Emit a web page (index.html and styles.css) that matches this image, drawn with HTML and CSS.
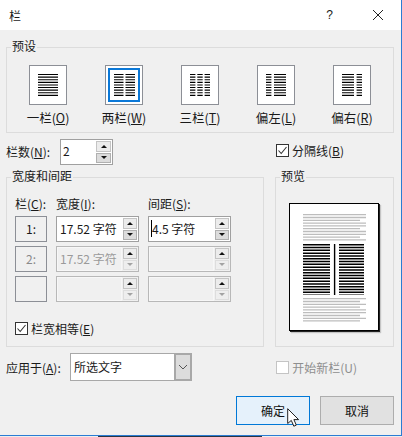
FILE: index.html
```html
<!DOCTYPE html>
<html lang="zh">
<head>
<meta charset="utf-8">
<title>栏</title>
<link rel="stylesheet" href="styles.css">
</head>
<body>
<div class="dialog">
  <header class="titlebar">
    <span class="title">栏</span>
    <span class="help">?</span>
    <svg class="close" width="12" height="12" viewBox="0 0 12 12"><path d="M1 1 L11 11 M11 1 L1 11" stroke="#222" stroke-width="1" fill="none"/></svg>
  </header>
  <main class="body">
    <section class="group presets">
      <span class="legend">预设</span>
      <div class="preset-row">
        <div class="preset">
          <div class="tile"><svg width="20" height="22" viewBox="0 0 20 22"><path class="ln" stroke-width="20" d="M10 0V22"/></svg></div>
          <span class="plabel">一栏(<u>O</u>)</span>
        </div>
        <div class="preset">
          <div class="tile selected"><svg width="21" height="22" viewBox="0 0 21 22"><path class="ln" stroke-width="9.5" d="M4.75 0V22"/><path class="ln" stroke-width="9.5" d="M16.25 0V22"/></svg></div>
          <span class="plabel">两栏(<u>W</u>)</span>
        </div>
        <div class="preset">
          <div class="tile"><svg width="20" height="22" viewBox="0 0 20 22"><path class="ln" stroke-width="5.4" d="M2.7 0V22"/><path class="ln" stroke-width="5.4" d="M10 0V22"/><path class="ln" stroke-width="5.4" d="M17.3 0V22"/></svg></div>
          <span class="plabel">三栏(<u>T</u>)</span>
        </div>
        <div class="preset">
          <div class="tile"><svg width="20" height="22" viewBox="0 0 20 22"><path class="ln" stroke-width="5.4" d="M2.7 0V22"/><path class="ln" stroke-width="12" d="M14 0V22"/></svg></div>
          <span class="plabel">偏左(<u>L</u>)</span>
        </div>
        <div class="preset">
          <div class="tile"><svg width="20" height="22" viewBox="0 0 20 22"><path class="ln" stroke-width="12" d="M6 0V22"/><path class="ln" stroke-width="5.4" d="M17.3 0V22"/></svg></div>
          <span class="plabel">偏右(<u>R</u>)</span>
        </div>
      </div>
    </section>

    <div class="count-row">
      <div class="count-left">
        <span class="count-label">栏数(<u>N</u>):</span>
        <div class="spin count-spin">
          <span class="value count-value">2</span>
          <div class="arrows big"><span class="arrow top"><i class="up"></i></span><span class="arrow bottom"><i class="down"></i></span></div>
        </div>
      </div>
      <label class="check">
        <span class="box"><svg width="13" height="13" viewBox="0 0 13 13"><path d="M2.5 6.5 L5.2 9.5 L10.5 3" stroke="#333" stroke-width="1.1" fill="none"/></svg></span>
        <span>分隔线(<u>B</u>)</span>
      </label>
    </div>

    <div class="middle">
      <section class="group width-group">
        <span class="legend">宽度和间距</span>
        <div class="grid">
          <span class="hd">栏(<u>C</u>):</span>
          <span class="hd">宽度(<u>I</u>):</span>
          <span class="hd">间距(<u>S</u>):</span>

          <div class="num">1:</div>
          <div class="spin wide"><span class="value">17.52 字符</span><div class="arrows"><span class="arrow top"><i class="up"></i></span><span class="arrow bottom"><i class="down"></i></span></div></div>
          <div class="spin wide"><span class="value gap-value"><b class="caret"></b>4.5 字符</span><div class="arrows"><span class="arrow top"><i class="up"></i></span><span class="arrow bottom"><i class="down"></i></span></div></div>

          <div class="num muted">2:</div>
          <div class="spin wide off"><span class="value">17.52 字符</span><div class="arrows"><span class="arrow top"><i class="up"></i></span><span class="arrow faint"><i class="down dim"></i></span></div></div>
          <div class="spin wide off"><span class="value"></span><div class="arrows"><span class="arrow top"><i class="up"></i></span><span class="arrow faint"><i class="down dim"></i></span></div></div>

          <div class="num"></div>
          <div class="spin wide off"><span class="value"></span><div class="arrows"><span class="arrow top"><i class="up"></i></span><span class="arrow faint"><i class="down dim"></i></span></div></div>
          <div class="spin wide off"><span class="value"></span><div class="arrows"><span class="arrow top"><i class="up"></i></span><span class="arrow faint"><i class="down dim"></i></span></div></div>
        </div>
        <label class="check equal">
          <span class="box"><svg width="13" height="13" viewBox="0 0 13 13"><path d="M2.5 6.5 L5.2 9.5 L10.5 3" stroke="#333" stroke-width="1.1" fill="none"/></svg></span>
          <span>栏宽相等(<u>E</u>)</span>
        </label>
      </section>

      <section class="group preview">
        <span class="legend">预览</span>
        <div class="page">
          <svg class="sample" width="63" height="108" viewBox="0 0 63 108">
            <path class="grey" d="M0 .7H63M0 3.5H63M0 6.3H57M0 9.1H63M0 11.9H63M0 14.7H57M0 17.5H63M0 20.3H63M0 23.1H57M0 25.9H63"/>
            <path class="black" stroke-width="27" d="M13.5 30V81"/>
            <path class="black" stroke-width="25" d="M48.5 30V81"/>
            <path class="divider" d="M31.6 30V81"/>
            <path class="grey" d="M0 84.7H63M0 87.5H57M0 90.3H63M0 93.1H57M0 95.9H63M0 98.7H63M0 101.5H57M0 104.3H63M0 106.9H57"/>
          </svg>
        </div>
      </section>
    </div>

    <div class="apply-row">
      <div class="apply-left">
        <span class="apply-label">应用于(<u>A</u>):</span>
        <div class="select">
          <span class="select-value">所选文字</span>
          <span class="select-btn"><svg width="10" height="6" viewBox="0 0 10 6"><path d="M1 1 L5 5 L9 1" stroke="#555" stroke-width="1" fill="none"/></svg></span>
        </div>
      </div>
      <label class="check disabled">
        <span class="box"></span>
        <span>开始新栏(U)</span>
      </label>
    </div>

    <div class="actions">
      <button class="btn primary">确定</button>
      <button class="btn">取消</button>
      <svg class="cursor" width="13" height="20" viewBox="0 0 13 20"><path d="M.7 .7 V15.5 L4.3 12.4 L6.8 18.2 L9.3 17.1 L6.9 11.6 H11.6 Z" fill="#fff" stroke="#222" stroke-width="1"/></svg>
    </div>
  </main>
</div>
</body>
</html>
```

FILE: styles.css
```css
* { box-sizing: border-box; }
html, body { margin: 0; padding: 0; }
body {
  width: 402px;
  height: 437px;
  overflow: hidden;
  background: linear-gradient(to right, #eeeeee 98px, #2a3440 98px, #2a3440 262px, #eeeeee 262px);
  font-family: "Noto Sans CJK SC", "Liberation Sans", sans-serif;
  font-size: 12px;
  color: #1a1a1a;
}
u { text-underline-offset: 1px; }
.dialog {
  width: 402px;
  height: 436px;
  background: #f0f0f0;
  border-right: 1px solid #2b7cd3;
  border-bottom: 1px solid #2b7cd3;
  display: flex;
  flex-direction: column;
}
.titlebar {
  height: 30px;
  background: #fff;
  display: flex;
  align-items: center;
  padding: 0 17px 0 9px;
  flex: none;
}
.title { font-size: 12px; flex: 1; }
.help { font-family: "Liberation Sans", sans-serif; font-size: 12px; margin-right: 39px; }
.body { padding: 17px 7px 0 6px; flex: 1; display: flex; flex-direction: column; position: relative; }
.group { border: 1px solid #dcdcdc; position: relative; }
.legend {
  position: absolute;
  left: 4px;
  top: -10px;
  background: #f0f0f0;
  padding: 0 1px;
  line-height: 16px;
  font-size: 12px;
}
.presets { height: 86px; }
.preset-row { display: flex; padding: 17px 0 0 3px; }
.preset { width: 76px; display: flex; flex-direction: column; align-items: center; }
.tile {
  width: 38px; height: 40px;
  background: #fff;
  border: 1px solid #8c8f96;
  display: flex; align-items: center; justify-content: center;
}
.tile.selected { box-shadow: inset 0 0 0 2px #fff, inset 0 0 0 4px #0a78d7; }
.ln { stroke: #000; fill: none; stroke-dasharray: 1.1 1.5; }
.plabel { margin-top: 4px; line-height: 17px; white-space: nowrap; font-size: 12.5px; }
.count-row {
  height: 38px;
  margin-top: 6px;
  display: flex;
  justify-content: space-between;
}
.count-left { display: flex; align-items: flex-start; }
.count-label { width: 54px; line-height: 26px; }
.spin {
  background: #fff;
  border: 1px solid #a0a0a0;
  display: flex;
  align-items: stretch;
  height: 26px;
}
.count-spin { width: 53px; height: 26px; }
.value { flex: 1; padding-left: 3px; line-height: 24px; white-space: nowrap; overflow: hidden; position: relative; font-size: 12px; }
.count-value { padding-left: 2px; line-height: 21px; }
.gap-value { padding-left: 3px; }
.arrows { width: 16px; padding: 1px; display: flex; flex-direction: column; gap: 1px; flex: none; }
.arrows.big { width: 17px; }
.arrow { flex: 1; border: 1px solid #c8c8c8; display: flex; align-items: center; justify-content: center; }
.arrow.top { background: #ececec; border-color: #c4c4c4; }
.arrow.bottom { background: #dcdcdc; border-color: #b0b0b0; }
.arrow.faint { background: #eeeeee; border-color: #dddddd; }
.up, .down { width: 0; height: 0; border-left: 3px solid transparent; border-right: 3px solid transparent; }
.up { border-bottom: 3px solid #111; }
.down { border-top: 3px solid #111; }
.down.dim { border-top-color: #a3a3a3; }
.check { display: flex; align-items: center; gap: 3px; white-space: nowrap; margin-right: 50px; height: 14px; margin-top: 4px; }
.box { width: 13px; height: 13px; background: #fff; border: 1px solid #333; display: flex; flex: none; }
.box svg { margin: -1px; }
.middle { display: flex; gap: 11px; height: 170px; }
.width-group { width: 258px; padding: 17px 8px 0 8px; }
.preview { width: 119px; padding: 25px 0 0 13px; }
.grid { display: grid; grid-template-columns: 32px 83px 83px; column-gap: 9px; grid-template-rows: 17px 26px 26px 26px; row-gap: 4px; }
.hd { line-height: 17px; white-space: nowrap; }
.num {
  border: 1px solid #8c8f96;
  text-align: center;
  line-height: 24px;
  background: #f0f0f0;
}
.num.muted { color: #8a8a8a; }
.wide { height: 26px; }
.wide .value { padding-left: 3px; }
.off { background: #f0f0f0; color: #9a9a9a; border-color: #b8b8b8; }
.off .value { box-shadow: inset 0 0 0 1px #f7f7f7; }
.caret { position: absolute; left: 2px; top: 3px; width: 1px; height: 17px; background: #000; }
.equal { margin: 19px 0 0; height: 14px; }
.page {
  width: 90px;
  height: 128px;
  background: #fff;
  border: 1px solid #000;
  box-shadow: 1px 1px 0 #222, 2px 2px 1px #c4c4c4;
  padding: 10px 0 0 13px;
}
.sample { display: block; }
.grey { stroke: #bdbdbd; stroke-width: 1.3; fill: none; }
.black { stroke: #000; fill: none; stroke-dasharray: 1.5 1.3; }
.divider { stroke: #000; stroke-width: 1.4; fill: none; }
.apply-row { display: flex; justify-content: space-between; margin-top: 6px; height: 28px; }
.apply-left { display: flex; align-items: center; }
.apply-label { width: 64px; white-space: nowrap; }
.select { width: 122px; height: 28px; display: flex; border: 1px solid #a8a8a8; background: #fff; }
.select-value { flex: 1; padding-left: 3px; line-height: 25px; }
.select-btn { width: 18px; margin: -1px -1px -1px 0; background: #dcdcdc; border: 2px solid #a8a8a8; display: flex; align-items: center; justify-content: center; }
.disabled { color: #8e8e8e; margin-right: 37px; align-self: center; margin-top: 0; }
.disabled .box { border-color: #c4c4c4; }
.actions { display: flex; justify-content: flex-end; gap: 10px; margin-top: 15px; position: relative; }
.btn {
  width: 74px; height: 29px;
  background: #e1e1e1;
  border: 1px solid #adadad;
  font: inherit;
  color: #111;
  padding: 0;
}
.primary { background: #e5f1fb; border-color: #0078d7; }
.cursor { position: absolute; left: 281px; top: 12px; }
```
